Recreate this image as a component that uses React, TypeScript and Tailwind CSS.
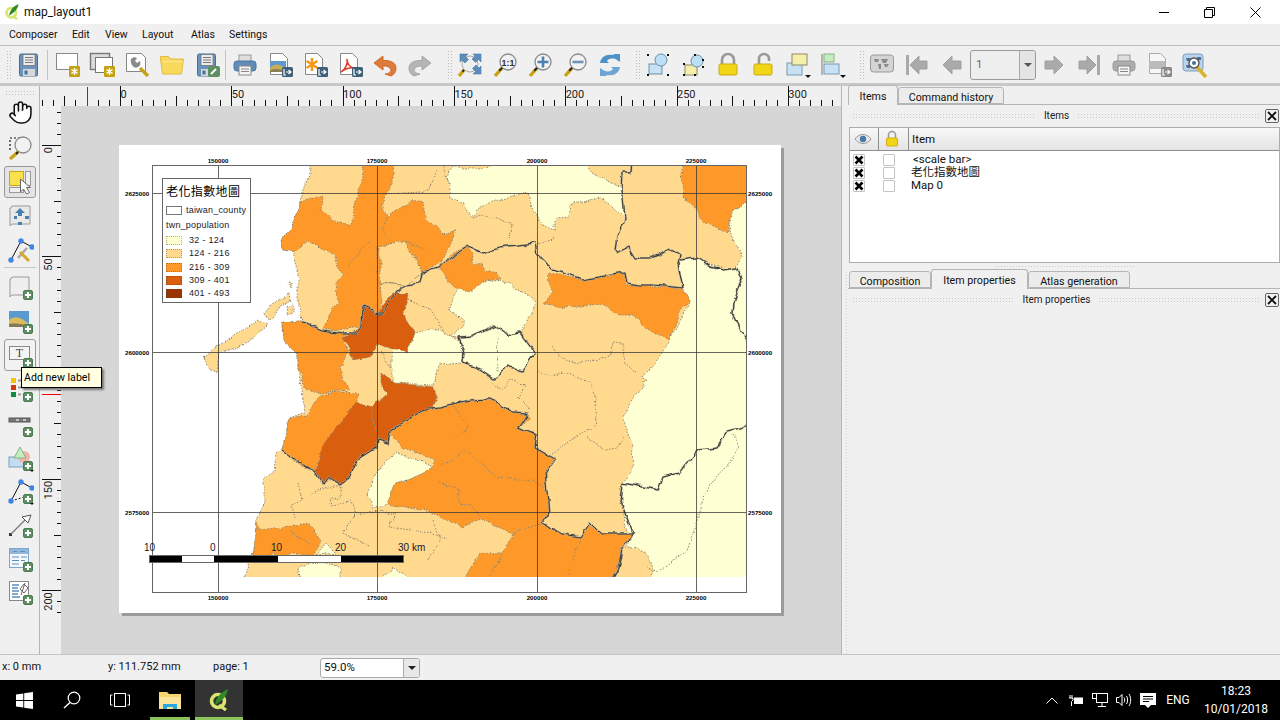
import React from "react";
import { Hand } from "lucide-react";

const I = ({ children, s = 28 }: { children: React.ReactNode; s?: number }) => (
  <svg width={s} height={s} viewBox="0 0 28 28" className="block shrink-0">{children}</svg>
);

const Gear = () => (
  <g>
    <rect x="16" y="15" width="11" height="11" rx="1" fill="#c6a212" />
    <path d="M21.5 17v7M18.5 18.7l6 3.6M24.5 18.7l-6 3.6" stroke="#fff" strokeWidth="1.4" />
  </g>
);
const Plus = () => (
  <g>
    <rect x="17.5" y="17.5" width="9" height="9" rx="1.5" fill="#5d8f62" stroke="#4c7a52" />
    <rect x="21" y="19" width="2" height="6" fill="#fff" />
    <rect x="19" y="21" width="6" height="2" fill="#fff" />
  </g>
);
const Exp = ({ c = "#3f6079" }: { c?: string }) => (
  <g>
    <rect x="16" y="16" width="11" height="10" rx="1.5" fill={c} />
    <path d="M18 18v6h2M20 21h4M22.5 19l2.5 2-2.5 2" stroke="#fff" strokeWidth="1.2" fill="none" />
  </g>
);
const PageF = ({ c = "#888" }: { c?: string }) => (
  <path d="M4.5 2.5h12l5 5v16h-17z" fill="#fff" stroke={c} />
);
const Mag = ({ cx = 17, cy = 11, r = 8 }: { cx?: number; cy?: number; r?: number }) => (
  <g>
    <path d={`M${cx - r * 0.7} ${cy + r * 0.7}L4 25`} stroke="#c9a21a" strokeWidth="3.4" />
    <path d={`M${cx - r * 0.7} ${cy + r * 0.7}L${cx - r * 1.1} ${cy + r * 1.1}`} stroke="#222" strokeWidth="2" />
    <circle cx={cx} cy={cy} r={r} fill="#f2f2f2" stroke="#8a8a8a" strokeWidth="1.3" />
  </g>
);
const Disk = () => (
  <g>
    <path d="M5 4.5a1.5 1.5 0 0 1 1.5-1.5h15a1.5 1.5 0 0 1 1.5 1.5v19a1.5 1.5 0 0 1-1.5 1.5h-15a1.5 1.5 0 0 1-1.5-1.5z" transform="translate(-.5 0)" fill="#6c93bd" stroke="#41709f" />
    <rect x="8" y="3.5" width="12" height="11" fill="#ececec" stroke="#6a6a6a" strokeWidth=".7" />
    <path d="M10 6.5h8M10 9h8M10 11.5h8" stroke="#777" />
    <rect x="8" y="18" width="12" height="7" fill="#d8d8d8" />
    <rect x="9.5" y="19.5" width="3" height="4" fill="#44709c" />
  </g>
);
const Printer = ({ m = "#5f8cb8", d = "#4a779f" }: { m?: string; d?: string }) => (
  <g>
    <rect x="8" y="4" width="12" height="8" fill="#dedede" stroke="#999" />
    <rect x="3" y="10" width="22" height="10" rx="3" fill={m} stroke={d} />
    <rect x="8" y="15" width="12" height="9" fill="#f4f4f4" stroke="#888" />
    <path d="M10 18h8M10 20.5h8" stroke="#888" />
  </g>
);
const Land = () => (
  <g>
    <rect x="4" y="10" width="16" height="11" fill="#5b9ad0" />
    <path d="M4 21v-4c5-5 9-4 16 0v4z" fill="#c6ad5a" />
    <path d="M4 21v-2c6-2 10-1 16 1v1z" fill="#8d8052" />
  </g>
);
const Ic: Record<string, React.ReactNode> = {
  save: <I><Disk /></I>,
  new: <I><rect x="3.5" y="2.5" width="21" height="16" fill="#fff" stroke="#888" /><Gear /></I>,
  dup: <I><rect x="2.5" y="2.5" width="19" height="16" fill="#dcdcdc" stroke="#777" strokeWidth="1.4" /><rect x="7.5" y="6.5" width="17" height="15" fill="#fff" stroke="#777" /><Gear /></I>,
  man: <I><path d="M3.5 2.5h15l4 4v14h-19z" fill="#fff" stroke="#888" /><path d="M17 17l8 8" stroke="#c9a21a" strokeWidth="3.4" /><path d="M8 8c2-2 4-2 6-1l-2 3 2 2 3-2c1 3 0 5-2 6s-3 1-4 0c-2-1-4-5-3-8z" fill="#8a8a8a" /></I>,
  folder: <I><path d="M2.5 8V5.5h8l2 2.5h13l-2 15h-19z" fill="#f8d95c" stroke="#e0bb45" /><path d="M5 10.5h20" stroke="#fbe89a" /></I>,
  saveas: <I><Disk /><rect x="15" y="15" width="12" height="11" rx="2" fill="#5d8f62" /><path d="M18 23l5-5" stroke="#fff" strokeWidth="2" /></I>,
  print: <I><Printer /></I>,
  img: <I><PageF /><Land /><Exp /></I>,
  svg: <I><PageF /><path d="M11 7v13M5.5 10l11 7M16.5 10l-11 7" stroke="#f59a1b" strokeWidth="2.6" /><Exp /></I>,
  pdf: <I><PageF /><path d="M5 21c4-2 7-8 6-13 0 5 3 9 8 9-5-1-10 1-14 4z" fill="none" stroke="#e0392c" strokeWidth="1.5" /><Exp /></I>,
  undo: <I><path d="M12 5L3 12l9 7v-4c4-.5 7 1 8 4 0 1-2 4-6 4l6 2c4-2 5-5 5-8 0-5-5-8-13-7.5z" fill="#df7b3a" stroke="#cf6b2a" /></I>,
  redo: <I><path d="M16 5l9 7-9 7v-4c-4-.5-7 1-8 4 0 1 2 4 6 4l-6 2c-4-2-5-5-5-8 0-5 5-8 13-7.5z" fill="#b5b5b5" stroke="#a5a5a5" /></I>,
  full: <I><circle cx="14" cy="13" r="8" fill="#efefef" stroke="#aaa" /><path d="M4 3h8L9.5 5.5l3 3-3.5 3.5-3-3L4 11zM25 3v8l-2.5-2.5-3 3L16 8l3-3L17 3zM25 23h-8l2.5-2.5-3-3 3.5-3.5 3 3 2-2z" fill="#5b8cba" stroke="#4a7aa8" strokeWidth=".6" /><path d="M8 19L3 25" stroke="#c9a21a" strokeWidth="3.4" /><path d="M8 19l-1.5 1.5" stroke="#222" strokeWidth="2" /></I>,
  z11: <I><Mag /><text x="17" y="14.5" textAnchor="middle" fontSize="9" fontWeight="700" fill="#333" fontFamily="Liberation Sans, sans-serif">1:1</text></I>,
  zin: <I><Mag /><path d="M17 5.5v11M11.5 11h11" stroke="#4f81b0" strokeWidth="2.6" /></I>,
  zout: <I><Mag /><path d="M11.5 11h11" stroke="#6f93b5" strokeWidth="2.6" /></I>,
  ref: <I><path d="M4 12c1-6 6-9 12-8l3-1 5 0v8l-3-2c-3-2-8-2-10 1l2 2z" fill="#4d93c9" /><path d="M24 16c-1 6-6 9-12 8l-3 1-5 0v-8l3 2c3 2 8 2 10-1l-2-2z" fill="#6ca5d3" /></I>,
  group: <I><rect x="5" y="13" width="13" height="10" fill="#c7e2f5" stroke="#6a8fa8" /><circle cx="17" cy="9" r="6" fill="#bcdff5" stroke="#6a8fa8" /><path d="M3 3h2v2H3zM23 3h2v2h-2zM3 23h2v2H3zM23 23h2v2h-2z" fill="#111" /></I>,
  ungroup: <I><rect x="6" y="14" width="12" height="10" fill="#f4efaa" stroke="#8a8a6a" /><circle cx="18" cy="10" r="6" fill="#bcdff5" stroke="#6a8fa8" /><path d="M4 12h2v2H4zM15 3h2v2h-2zM23 8h2v2h-2zM23 15h2v2h-2zM4 23h2v2H4zM15 23h2v2h-2z" fill="#111" /></I>,
  lock: <I><path d="M8 14V9a6 6 0 0 1 12 0v5" fill="none" stroke="#999" strokeWidth="2.6" /><rect x="5" y="13" width="18" height="11" rx="1.5" fill="#f2d516" stroke="#c9a914" /></I>,
  unlock: <I><path d="M11 14V8a5 5 0 0 1 10 0v2" fill="none" stroke="#999" strokeWidth="2.6" transform="translate(-1 0)" /><rect x="5" y="13" width="18" height="11" rx="1.5" fill="#f2d516" stroke="#c9a914" /></I>,
  raise: <I><rect x="3" y="12" width="15" height="12" fill="#c7e2f5" stroke="#7a9ab0" /><rect x="8" y="3" width="15" height="11" fill="#f4efaa" stroke="#8a8a6a" /><path d="M21 24h6l-3 3z" fill="#111" /></I>,
  align: <I><path d="M3 3v21" stroke="#777" /><rect x="5" y="3" width="10" height="8" fill="#c4eec0" stroke="#8ab088" /><rect x="5" y="13" width="15" height="10" fill="#c7e2f5" stroke="#7a9ab0" /><path d="M21 24h6l-3 3z" fill="#111" /></I>,
  atlas: <I><rect x="2.5" y="4" width="23" height="17" rx="3" fill="#d4d4d4" stroke="#999" /><path d="M6 8h5l-1 3H7zM13 8h7l-2 4h-3zM10 13h3v5h-2zM16 13h5l-2 3h-2z" fill="#8a8a8a" /></I>,
  first: <I><path d="M3 4h3v20H3z" fill="#aaa" /><path d="M7 14l9-9v5h8v8h-8v5z" fill="#aaa" stroke="#a0a0a0" /></I>,
  prev: <I><path d="M5 14l9-9v5h9v8h-9v5z" fill="#aaa" stroke="#a0a0a0" /></I>,
  next: <I><path d="M23 14l-9-9v5H5v8h9v5z" fill="#aaa" stroke="#a0a0a0" /></I>,
  last: <I><path d="M25 4h-3v20h3z" fill="#aaa" /><path d="M21 14l-9-9v5H4v8h8v5z" fill="#aaa" stroke="#a0a0a0" /></I>,
  gprint: <I><Printer m="#adadad" d="#999" /></I>,
  gexp: <I><path d="M4.5 2.5h11l5 5v15h-16z" fill="#f6f6f6" stroke="#aaa" /><rect x="4" y="10" width="16" height="8" fill="#bbb" /><Exp c="#8a8a8a" /></I>,
  aset: <I><rect x="3" y="3" width="20" height="17" rx="3" fill="#b9d3ec" stroke="#7c9dbd" /><path d="M6 7h5l-1 3H7zM6 14h4v3H7zM17 6h4v3h-4z" fill="#4b6f92" /><path d="M16 15l10 11" stroke="#d7b32a" strokeWidth="3.4" /><circle cx="14" cy="12" r="5" fill="#fff" stroke="#555" strokeWidth="1.4" /><circle cx="14" cy="12" r="2" fill="#4b6f92" /></I>,

  zarea: <I><path d="M4 18V6h12" fill="none" stroke="#111" strokeWidth="1.2" strokeDasharray="2 2" /><path d="M12 20l-8 7" stroke="#c9a21a" strokeWidth="3.4" /><path d="M12 20l-2 2" stroke="#222" strokeWidth="2" /><circle cx="17" cy="13" r="8" fill="#f2f2f2" stroke="#8a8a8a" strokeWidth="1.3" /></I>,
  sel: <I><rect x="3.5" y="3.5" width="14" height="14" fill="#fbe04e" stroke="#c9a914" /><rect x="19.5" y="3.5" width="5" height="14" fill="#eee" stroke="#999" /><rect x="3.5" y="19.5" width="14" height="5" fill="#eee" stroke="#999" /><path d="M13 12l0 13 3-3 3 5 3-1.5-3-5 4 0z" transform="translate(1.5 -1)" fill="#fff" stroke="#666" /></I>,
  move: <I><path d="M5 6a2 2 0 0 1 2-2h17v18H7a3 3 0 0 0-3 2V6z" fill="#e9e9e9" stroke="#999" /><path d="M14 6l5 5h-3v3h-4v-3H9z" fill="#4a7eaf" /><path d="M8 14h3v3H8zM19 14h4v3h-4zM12 20h4v3h-4z" fill="#4a7eaf" /></I>,
  edit: <I><path d="M15 5l11 6M5 24l10-19" stroke="#111" fill="none" /><path d="M21 12l-9 10" stroke="#aaa" strokeWidth="2.5" /><path d="M14 16l9 9" stroke="#d8a928" strokeWidth="3" /><circle cx="15" cy="5" r="2.7" fill="#3f85e6" /><circle cx="26" cy="11" r="2.7" fill="#3f85e6" /><circle cx="5" cy="24" r="2.7" fill="#3f85e6" /></I>,
  amap: <I><path d="M5 6a2 2 0 0 1 2-2h16v18H7a3 3 0 0 0-3 2V6z" fill="#eee" stroke="#999" /><Plus /></I>,
  aimg: <I><rect x="3" y="4" width="20" height="16" fill="#5b9ad0" /><path d="M3 20v-7c6-5 12-3 20 4v3z" fill="#d8bc5e" /><path d="M3 20v-3c8-1 13 0 20 2v1z" fill="#857a55" /><Plus /></I>,
  alab: <I><rect x="3.5" y="5.5" width="20" height="13" fill="#f5f5f5" stroke="#888" /><text x="13.5" y="16" textAnchor="middle" fontSize="12" fill="#444" fontFamily="Liberation Serif, serif">T</text><Plus /></I>,
  aleg: <I><rect x="5" y="3" width="5" height="5" fill="#f5c400" /><rect x="5" y="10" width="5" height="5" fill="#d43a10" /><rect x="5" y="17" width="5" height="5" fill="#0d8f3f" /><path d="M12 5.5h9M12 12.5h9M12 19.5h3" stroke="#999" strokeWidth="2" /><Plus /></I>,
  ascale: <I><rect x="3" y="8" width="21" height="4" fill="#777" stroke="#555" /><path d="M10 10h3M17 10h3" stroke="#ddd" strokeWidth="1.5" /><Plus /></I>,
  ashape: <I><rect x="3" y="13" width="16" height="10" fill="#c2ddf2" stroke="#7aa0c2" /><circle cx="18" cy="13" r="6" fill="#f2b3ab" /><path d="M8 14l6-11 6 11z" fill="#c4eec0" stroke="#8ab088" /><Plus /><path d="M24 26h4l-2 2z" fill="#111" /></I>,
  anode: <I><path d="M15 5l11 6M5 24l10-19" stroke="#111" /><path d="M5 24l17-5" stroke="#111" strokeDasharray="2 2" /><circle cx="15" cy="5" r="2.7" fill="#3f85e6" /><circle cx="26" cy="11" r="2.7" fill="#3f85e6" /><circle cx="5" cy="24" r="2.7" fill="#3f85e6" /><Plus /><path d="M24 26h4l-2 2z" fill="#111" /></I>,
  aarrow: <I><rect x="3" y="22" width="3" height="3" fill="#333" /><path d="M5 23L20 8" stroke="#777" strokeWidth="1.2" /><path d="M25 4l-9 2 6 6z" fill="#fff" stroke="#555" /><Plus /></I>,
  atable: <I><rect x="3.5" y="3.5" width="19" height="19" fill="#f4f8fc" stroke="#7ea5cc" /><rect x="4" y="4" width="18" height="5" fill="#92b7da" /><path d="M7 6.5h4M14 6.5h5M6 12h7M15 12h6M6 15.5h7M15 15.5h4M6 19h7" stroke="#5c8fc0" strokeWidth="1.2" /><Plus /></I>,
  ahtml: <I><rect x="3.5" y="3.5" width="19" height="19" fill="#fff" stroke="#888" /><path d="M6 7h7M6 10h6M6 13h7M6 16h6M6 19h8" stroke="#5c8fc0" strokeWidth="1.6" /><path d="M18 6l-4 5 4 4 4-5zM19 5l-4 12" fill="none" stroke="#666" /><Plus /></I>,
};

const TB = ({ n }: { n: string }) => (
  <div className="w-[35px] h-[35px] flex items-center justify-center shrink-0">{Ic[n]}</div>
);
const Grip = ({ c = "" }: { c?: string }) => (
  <div className={`w-[5px] h-[30px] shrink-0 bg-[radial-gradient(circle,#bdbdbd_1px,transparent_1px)] bg-[length:3px_3px] ${c}`} />
);
const Sep = () => <div className="w-px h-[30px] bg-[#c4c4c4] shrink-0" />;

const Toolbar = () => (
  <div className="h-[41px] shrink-0 flex items-center pl-[6px] pt-px border-t border-[#bdbdbd] border-b-[3px] border-b-[#c8c8c8]">
    <Grip /><TB n="save" /><div className="ml-px mr-[1px]"><Sep /></div>
    <TB n="new" /><TB n="dup" /><TB n="man" /><TB n="folder" /><TB n="saveas" />
    <div className="mx-px"><Sep /></div>
    <TB n="print" /><TB n="img" /><TB n="svg" /><TB n="pdf" /><TB n="undo" /><TB n="redo" />
    <Grip c="ml-[10px]" />
    <TB n="full" /><TB n="z11" /><TB n="zin" /><TB n="zout" /><TB n="ref" />
    <Grip c="ml-[8px]" />
    <TB n="group" /><TB n="ungroup" /><TB n="lock" /><TB n="unlock" /><TB n="raise" /><TB n="align" />
    <Grip c="ml-[9px]" />
    <TB n="atlas" /><TB n="first" /><TB n="prev" />
    <div className="ml-px w-[66px] h-[30px] shrink-0 flex border border-[#9a9a9a] rounded-[3px] bg-[#eeeeee]">
      <div className="flex-1 pl-[5px] flex items-center text-[11.5px] text-[#66667a]">1</div>
      <div className="w-[16px] border-l border-[#aaa] flex items-center justify-center bg-[#e4e4e4] rounded-r-[3px]">
        <div className="w-0 h-0 border-x-[4px] border-x-transparent border-t-[4px] border-t-[#555]" />
      </div>
    </div>
    <TB n="next" /><TB n="last" /><TB n="gprint" /><TB n="gexp" /><TB n="aset" />
  </div>
);

const LeftTool = ({ n, c }: { n: string; c?: string }) => (
  <div className={`w-[32px] h-[34px] ml-[4px] flex items-center justify-center shrink-0 ${c ?? ""}`}>{Ic[n]}</div>
);
const boxed = "!h-[32px] border border-[#999] rounded-[3px]";

const LeftBar = () => (
  <div className="w-[39px] shrink-0 flex flex-col pt-[4px]">
    <div className="h-[5px] w-[30px] ml-[5px] bg-[radial-gradient(circle,#c4c4c4_1px,transparent_1px)] bg-[length:3px_3px]" />
    <div className="w-[32px] h-[34px] ml-[4px] flex items-center justify-center">
      <Hand size={25} fill="#fff" stroke="#111" strokeWidth={1.5} />
    </div>
    <LeftTool n="zarea" />
    <LeftTool n="sel" c={`${boxed} bg-[#e4e4e4] mt-[3px]`} />
    <LeftTool n="move" c="mt-px" />
    <LeftTool n="edit" />
    <div className="h-px w-[32px] ml-[4px] shrink-0 bg-[#c8c8c8]" />
    <LeftTool n="amap" c="mt-[2px]" />
    <LeftTool n="aimg" />
    <LeftTool n="alab" c={`${boxed} bg-[#f2f2f2] mt-px`} />
    <LeftTool n="aleg" c="mt-px" />
    <LeftTool n="ascale" c="mt-px" />
    <LeftTool n="ashape" />
    <LeftTool n="anode" c="-mt-px" />
    <LeftTool n="aarrow" />
    <LeftTool n="atable" />
    <LeftTool n="ahtml" c="-mt-px" />
  </div>
);

const RULE_X = 120;
const RULE_Y = 145;
const step = 11.13;
const topTicks = Array.from({ length: 72 }, (_, i) => i - 7);
const TopRuler = () => (
  <svg width="800" height="20" viewBox="41 86 800 20" className="block shrink-0 bg-[#f0f0f0]">
    {topTicks.map((k) => {
      const x = Math.round(RULE_X + k * step) + 0.5;
      const big = k % 10 === 0;
      const mid = k % 5 === 0;
      return <line key={k} x1={x} x2={x} y1={big ? 86 : mid ? 96 : 100} y2={106} stroke="#111" />;
    })}
    {[0, 50, 100, 150, 200, 250, 300].map((v) => (
      <text key={v} x={RULE_X + (v / 5) * step + 0.5} y={98} fontSize="11" fill="#222" fontFamily="Roboto, sans-serif">{v}</text>
    ))}
    <line x1="87.5" x2="87.5" y1="87" y2="106" stroke="#e00" />
  </svg>
);
const leftTicks = Array.from({ length: 46 }, (_, i) => i - 3);
const LeftRuler = () => (
  <svg width="20" height="548" viewBox="41 106 20 548" className="block shrink-0 bg-[#f0f0f0]">
    {leftTicks.map((k) => {
      const y = Math.round(RULE_Y + k * step) + 0.5;
      const big = k % 10 === 0;
      const mid = k % 5 === 0;
      return <line key={k} y1={y} y2={y} x1={big ? 42 : mid ? 54 : 57} x2={61} stroke="#111" />;
    })}
    {[0, 50, 100, 150, 200].map((v) => {
      const y = RULE_Y + (v / 5) * step + 2;
      return (
        <text key={v} x={0} y={0} transform={`translate(52 ${y}) rotate(-90)`} textAnchor="end" fontSize="11" fill="#222" fontFamily="Roboto, sans-serif">{v}</text>
      );
    })}
    <line x1="42" x2="61" y1="394.5" y2="394.5" stroke="#e00" />
  </svg>
);

const ext = (s: string) =>
  s.split(" ").map((p) => {
    let [x, y] = p.split(",").map(Number);
    if (x >= 745) x = 756;
    if (y <= 165) y = 155;
    if (y >= 577) y = 587;
    return `${x},${y}`;
  }).join(" ");

const CREAM = "#ffffd4", LIGHT = "#fed98e", OR = "#fe9929", DK = "#d95f0e";
const land = "313,165 310,173 302,192 300,202 295,213 292,228 280,242 283,248 293,250 293,257 298,273 298,307 303,322 282,323 283,340 298,353 298,370 300,380 302,400 305,412 290,418 282,450 277,453 275,472 265,478 265,503 257,520 253,547 242,577 746,577 746,165";
const polys: [string, string][] = [
  [CREAM, "680,260 697,258 710,265 725,269 737,268 742,257 737,245 730,233 732,212 746,195 746,577 650,577 653,570 647,553 627,547 632,533 627,533 622,503 623,483 632,473 633,443 623,420 630,403 647,380 643,377 663,353 670,340 690,300 683,288 678,263"],
  [CREAM, "447,177 453,168 483,168 523,165 580,165 593,173 622,188 625,218 610,203 600,198 582,202 570,205 568,217 555,218 555,230 543,225 532,208 528,193 510,197 480,207 472,217 463,203 450,197"],
  [CREAM, "450,310 457,290 483,282 503,280 530,297 537,303 520,337 507,333 493,325 472,337 458,338 450,337 463,327 463,320"],
  [CREAM, "458,338 472,337 495,325 507,335 520,333 535,353 523,370 510,367 493,378 477,367 462,363 463,353"],
  [CREAM, "393,352 412,335 438,328 450,337 458,340 463,353 462,363 440,365 435,385 393,383 393,370"],
  [CREAM, "368,492 382,465 397,453 420,462 432,467 415,477 395,483 387,505 373,510"],
  [CREAM, "298,567 310,563 340,565 342,577 302,577"],
  [CREAM, "317,555 327,543 337,553"],
  [CREAM, "377,577 393,567 417,577"],
  [CREAM, "367,165 377,172 390,165"],
  [OR, "680,165 683,197 707,223 728,233 732,212 746,195 746,165"],
  [OR, "550,273 580,280 607,277 625,273 625,285 640,285 653,287 683,288 690,300 680,310 670,340 650,332 632,315 618,315 603,303 577,308 542,305 552,293 547,280"],
  [OR, "440,267 457,252 467,247 473,255 472,265 483,263 485,272 495,272 502,278 483,282 470,293 453,287 443,273"],
  [OR, "280,242 292,228 295,213 300,202 323,195 322,210 333,220 350,227 358,192 363,180 362,165 393,165 392,183 382,203 387,217 412,200 423,203 425,217 442,233 456,230 450,243 442,263 422,272 405,285 380,283 382,303 377,313 363,307 362,327 337,330 323,328 328,317 337,303 335,283 343,273 337,270 335,255 310,242 293,250 283,248"],
  [LIGHT, "380,247 405,240 422,272 405,285 380,283"],
  [OR, "282,323 298,322 323,330 347,333 343,340 350,353 340,367 348,390 320,393 303,388 302,375 298,370 298,353 283,340"],
  [OR, "290,418 307,415 320,395 337,392 358,393 357,403 340,422 327,437 320,457 313,470 302,467 282,450"],
  [DK, "343,337 363,327 363,308 377,313 393,293 407,293 405,313 415,333 407,353 377,345 370,357 353,360 350,348"],
  [DK, "380,373 393,383 435,387 437,397 427,410 407,420 393,428 388,443 378,440 372,413 373,407 388,393 380,385"],
  [DK, "357,403 373,407 372,413 378,440 377,448 358,460 350,478 340,485 328,478 323,485 314,471 320,457 327,437 340,422"],
  [OR, "390,433 407,420 427,408 440,407 470,400 490,399 513,412 527,413 528,418 518,427 537,435 535,447 555,458 547,470 545,487 549,512 542,523 513,533 480,520 463,527 450,523 432,513 387,505 395,483 415,477 432,467 435,460 402,447"],
  [OR, "542,523 560,533 580,538 590,523 600,533 632,533 622,550 617,570 607,577 460,577 480,552 503,553 513,533"],
  [OR, "257,523 260,530 310,523 320,540 315,555 252,555"],
];
const dots = [
  "733,435 740,448 710,485 697,520 687,550 658,572 645,566",
  "490,380 502,390 510,380 525,385 517,397 530,410",
  "537,373 573,375 590,383 597,400 593,427 580,435 553,453",
  "587,437 607,450 617,448 625,437",
  "553,345 560,357 580,363 610,357 613,342 622,343 625,363 637,373",
  "497,337 498,373",
  "472,217 480,215 512,223 510,240",
  "555,237 537,245",
  "440,467 467,450 497,478 533,480 543,487",
  "455,437 468,427 455,407",
  "440,483 460,490 458,503 472,505 480,517",
  "580,538 567,577",
  "503,553 490,577",
  "298,483 302,500 292,507 295,520",
  "310,493 327,487 342,487 340,497 330,498 332,505 350,502 355,513 343,533 370,547",
  "355,513 397,512 390,527 410,530 430,533 447,540",
  "435,170 432,185 422,193 383,195",
  "443,167 450,187",
  "387,217 382,230 387,240",
  "378,247 377,283",
  "368,243 347,267",
  "380,283 403,285",
  "405,240 425,250",
  "407,300 430,310 445,333",
  "380,352 395,370",
  "312,545 290,530",
  "432,520 440,540 428,560",
];
const counties = [
  "632,165 631,173 623,173 622,190 625,218 617,237 615,250 617,253 628,247 635,258 650,258 660,255 670,248 680,255 678,263 683,288 653,285 640,285 627,283 625,273 610,275 583,280 553,270 537,253 535,243 500,247 482,253 468,247 463,250 440,268 422,272 420,283 405,285 397,292 383,313 377,313 363,307 362,327 358,333 343,333 323,330 303,323",
  "680,260 697,258 710,267 723,270 737,268 742,277 733,303 732,313 740,330 745,353",
  "458,338 472,337 495,325 507,335 520,333 535,353 523,370 510,367 493,378 477,367 462,363 463,353 458,338",
  "282,450 300,463 315,472 323,485 328,478 340,485 350,478 358,460 377,448 378,440 388,443 390,432 407,420 427,408 440,407 470,400 490,399 513,412 527,413 518,427 537,435 535,447 555,458 545,473 549,512 542,523 563,535 580,538 590,523 600,533 632,533 622,550 617,570 607,577",
  "632,533 625,513 621,502 623,483 658,490 663,477 680,473 697,450 717,448 727,432 743,428 746,418",
];
const islands = [
  "203,357 213,348 233,337 257,320 267,325 247,343 220,353 218,373 207,367",
  "265,313 273,303 283,300 290,293 291,299 277,310 272,320 267,319",
  "287,307 293,303 293,313 288,315",
  "288,283 291,284 290,288",
];
const vGrid = [218, 377, 537, 696];
const hGrid = [193, 352, 512];
const gridLabelV = ["150000", "175000", "200000", "225000"];
const gridLabelH = ["2625000", "2600000", "2575000"];
const gridFont = { fontFamily: "Liberation Sans, sans-serif", fontSize: 6.2, fontWeight: 700, fill: "#000" } as const;

const MapSvg = () => (
  <svg width="662" height="468" viewBox="119 145 662 468" className="block">
    <defs>
      <clipPath id="mapclip"><rect x="153" y="165" width="593" height="412" /></clipPath>
      <filter id="rough" x="140" y="150" width="630" height="445" filterUnits="userSpaceOnUse" colorInterpolationFilters="sRGB">
        <feTurbulence type="fractalNoise" baseFrequency="0.07" numOctaves="3" seed="4" />
        <feDisplacementMap in="SourceGraphic" scale="7" xChannelSelector="R" yChannelSelector="G" />
      </filter>
    </defs>
    <g clipPath="url(#mapclip)">
      <g filter="url(#rough)">
        <polygon points={ext(land)} fill={LIGHT} stroke="#8f8672" strokeDasharray="1.5 1.5" />
        {islands.map((p) => <polygon key={p} points={p} fill={LIGHT} stroke="#8f8672" strokeDasharray="1.5 1.5" />)}
        {polys.map(([c, p]) => <polygon key={p} points={ext(p)} fill={c} stroke="#8f8672" strokeDasharray="1.5 1.5" />)}
        {dots.map((p) => <polyline key={p} points={p} fill="none" stroke="#8f8672" strokeDasharray="1.5 1.5" />)}
        {counties.map((p) => (
          <g key={p}>
            <polyline points={ext(p)} fill="none" stroke="#aaa69a" strokeWidth="2" />
            <polyline points={ext(p)} fill="none" stroke="#3a372f" strokeWidth="1" />
          </g>
        ))}
      </g>
    </g>
    {vGrid.map((x, i) => (
      <g key={x}>
        <line x1={x + 0.5} x2={x + 0.5} y1="165" y2="592" stroke="#333" strokeOpacity=".75" />
        <text x={x} y="163" textAnchor="middle" {...gridFont}>{gridLabelV[i]}</text>
        <text x={x} y="600" textAnchor="middle" {...gridFont}>{gridLabelV[i]}</text>
      </g>
    ))}
    {hGrid.map((y, i) => (
      <g key={y}>
        <line x1="152" x2="746" y1={y + 0.5} y2={y + 0.5} stroke="#333" strokeOpacity=".75" />
        <text x="125" y={y + 2.5} {...gridFont}>{gridLabelH[i]}</text>
        <text x="748" y={y + 2.5} {...gridFont}>{gridLabelH[i]}</text>
      </g>
    ))}
    <rect x="152.5" y="165.5" width="594" height="427" fill="none" stroke="#666" />
  </svg>
);

const swatches: [string, string, string][] = [
  ["#ffffd4", "32 - 124", "#b5ad80"],
  ["#fed98e", "124 - 216", "#b09a6a"],
  ["#fe9929", "216 - 309", "#a87a3a"],
  ["#d95f0e", "309 - 401", "#8a5020"],
  ["#993404", "401 - 493", "#604030"],
];
const Legend = () => (
  <div className="absolute left-[43px] top-[33px] w-[89px] h-[125px] bg-white border border-[#666] text-[9px] text-[#1a1a2a] font-['Liberation_Sans',sans-serif] pt-[3px] pl-[3px]">
    <div className="h-[18px] text-[12px] leading-[18px] tracking-[0.4px] text-black font-['Noto_Sans_CJK_TC','Noto_Sans_CJK_SC',sans-serif]">老化指數地圖</div>
    <div className="flex items-center h-[13px] mt-[4px]">
      <div className="w-[16px] h-[9px] border border-[#777] bg-white" />
      <span className="ml-[4px] tracking-[0.2px]">taiwan_county</span>
    </div>
    <div className="h-[13px] mt-[2px] leading-[13px] tracking-[0.2px]">twn_population</div>
    <div className="flex flex-col mt-[2px]">
      {swatches.map(([c, t, b]) => (
        <div key={t} className="flex items-center h-[13.3px]">
          <div className="w-[16px] h-[9px] border border-dotted" style={{ background: c, borderColor: b }} />
          <span className="ml-[7px] tracking-[0.3px]">{t}</span>
        </div>
      ))}
    </div>
  </div>
);
const ScaleBar = () => (
  <div className="absolute left-[30px] top-[395px] w-[255px] font-['Liberation_Sans',sans-serif] text-[10px] text-[#1a1a2a]">
    <div className="relative h-[15px]">
      <span className="absolute left-[-5px] top-0">10</span>
      <span className="absolute left-[61px] top-0">0</span>
      <span className="absolute left-[122px] top-0">10</span>
      <span className="absolute left-[186px] top-0">20</span>
      <span className="absolute left-[249px] top-0 whitespace-nowrap">30 km</span>
    </div>
    <div className="flex h-[8px] border border-[#666]">
      <div className="w-[32px] bg-black" />
      <div className="w-[32px] bg-white" />
      <div className="w-[64px] bg-black" />
      <div className="w-[63px] bg-white" />
      <div className="flex-1 bg-black" />
    </div>
  </div>
);

const Canvas = () => (
  <div className="flex-1 flex flex-col min-w-0 border-l border-[#b5b5b5] pl-px">
    <TopRuler />
    <div className="flex h-[548px]">
      <LeftRuler />
      <div className="w-[780px] h-[548px] bg-[#d6d6d6] pl-[58px] pt-[39px] overflow-hidden">
        <div className="relative w-[662px] h-[468px] bg-white shadow-[3px_3px_0_#9a9a9a]">
          <MapSvg />
          <Legend />
          <ScaleBar />
        </div>
      </div>
    </div>
  </div>
);

const GripBar = () => (
  <div className="h-[6px] flex-1 bg-[radial-gradient(circle,#c8c8c8_1px,transparent_1px)] bg-[length:3px_3px]" />
);
const DockTitle = ({ t }: { t: string }) => (
  <div className="h-[17px] flex items-center pl-[4px] text-[10px] text-[#222]">
    <GripBar />
    <span className="px-[8px]">{t}</span>
    <GripBar />
    <div className="w-[14px] h-[14px] ml-[4px] mr-px border border-[#666] rounded-[2px] flex items-center justify-center">
      <svg width="10" height="10" viewBox="0 0 10 10"><path d="M1 1l8 8M9 1l-8 8" stroke="#111" strokeWidth="1.8" /></svg>
    </div>
  </div>
);
const Tab = ({ t, active, w }: { t: string; active?: boolean; w: string }) => (
  <div className={`${w} flex items-center justify-center leading-none border border-[#b5b5b5] rounded-t-[3px] ${active ? "h-[20px] pt-[4px] bg-[#f0f0f0] border-b-0 -mb-px z-10" : "h-[17px] pt-[5px] bg-[#ececec]"}`}>{t}</div>
);
const Chk = ({ x }: { x?: boolean }) => (
  <div className="w-[12px] h-[12px] border border-[#c4c4c4] rounded-[1px] bg-white flex items-center justify-center">
    {x && <svg width="10" height="10" viewBox="0 0 10 10"><path d="M1.5 1.5l7 7M8.5 1.5l-7 7" stroke="#000" strokeWidth="2.6" /></svg>}
  </div>
);
const items: [string, string][] = [
  ["<scale bar>", "pl-[4px]"],
  ["老化指數地圖", "pl-[2px]"],
  ["Map 0", "pl-[2px]"],
];
const Right = () => (
  <div className="w-[432px] ml-auto shrink-0 flex flex-col text-[10.7px] text-[#111] relative">
    <div className="absolute left-[-3px] top-[185px] bottom-0 w-[3px] bg-[radial-gradient(circle,#cfcfcf_1px,transparent_1px)] bg-[length:3px_3px]" />
    <div className="flex items-end h-[19px] border-b border-[#b5b5b5]">
      <Tab t="Items" active w="w-[50px]" />
      <Tab t="Command history" w="w-[106px]" />
    </div>
    <div className="pt-[2px]"><DockTitle t="Items" /></div>
    <div className="h-[136px] ml-px mt-[3px] border border-[#adadad] bg-white flex flex-col text-[11.5px]">
      <div className="h-[23px] flex border-b border-[#8f8f8f] bg-[linear-gradient(#f8f8f8,#e4e4e4)]">
        <div className="w-[29px] pr-[3px] border-r border-[#8f8f8f] flex items-center justify-center">
          <svg width="18" height="12" viewBox="0 0 18 12"><path d="M1 6c4-6 12-6 16 0-4 6-12 6-16 0z" fill="#e8e8e8" stroke="#999" /><circle cx="9" cy="6" r="3.2" fill="#4a78a8" /></svg>
        </div>
        <div className="w-[30px] pr-[3px] border-r border-[#8f8f8f] flex items-center justify-center">
          <svg width="14" height="18" viewBox="0 0 14 18"><path d="M3.5 8V5a3.5 3.5 0 0 1 7 0v3" fill="none" stroke="#999" strokeWidth="1.5" /><rect x="1.5" y="8" width="11" height="8" rx="1" fill="#f2d516" stroke="#d0b014" /></svg>
        </div>
        <div className="flex-1 pl-[3px] pt-[2px] flex items-center text-[11.5px]">Item</div>
      </div>
      <div className="pt-[2px] font-['Roboto','Noto_Sans_CJK_TC',sans-serif]">
        {items.map(([t, p]) => (
          <div key={t} className="h-[13px] flex items-center leading-none">
            <div className="w-[29px] pl-[3px]"><Chk x /></div>
            <div className="w-[30px] pl-[4px]"><Chk /></div>
            <div className={p}>{t}</div>
          </div>
        ))}
      </div>
    </div>
    <div className="h-[4px] mx-auto mt-[2px] w-[140px] bg-[radial-gradient(circle,#c8c8c8_1px,transparent_1px)] bg-[length:3px_3px]" />
    <div className="flex items-end h-[20px] pl-px border-b border-[#b5b5b5]">
      <Tab t="Composition" w="w-[82px]" />
      <Tab t="Item properties" active w="w-[97px]" />
      <Tab t="Atlas generation" w="w-[102px]" />
    </div>
    <div className="pt-[2px]"><DockTitle t="Item properties" /></div>
  </div>
);

const WinIcon = () => (
  <svg width="17" height="17" viewBox="0 0 17 17"><path d="M0 2.5l7.3-1v6.6H0zM8.2 1.3L17 0v8.1H8.2zM0 9h7.3v6.6l-7.300-1zM8.2 9H17v8l-8.8-1.2z" fill="#fff" /></svg>
);

const Taskbar = () => (
  <div className="h-[40px] shrink-0 bg-black flex text-white text-[12px]">
    <div className="w-[48px] flex items-center justify-center"><WinIcon /></div>
    <div className="w-[48px] flex items-center justify-center">
      <svg width="18" height="18" viewBox="0 0 18 18"><circle cx="11" cy="7" r="5.8" fill="none" stroke="#fff" strokeWidth="1.2" /><path d="M7 11.5L1 17" stroke="#fff" strokeWidth="1.4" /></svg>
    </div>
    <div className="w-[48px] flex items-center justify-center">
      <svg width="20" height="14" viewBox="0 0 20 14"><rect x="4.5" y=".5" width="11" height="13" fill="none" stroke="#fff" /><path d="M2.5 2H.5v10h2M17.5 2h2v10h-2" fill="none" stroke="#fff" /></svg>
    </div>
    <div className="w-[40px] ml-[6px] relative flex items-center justify-center">
      <svg width="22" height="19" viewBox="0 0 22 19"><path d="M0 1h8l2 2h12v15H0z" fill="#f6d570" /><path d="M0 6h22v12H0z" fill="#fbe59c" /><path d="M4 18v-5h14v5h-4v-2H8v2z" fill="#2aa6e0" /></svg>
      <div className="absolute left-0 right-0 bottom-0 h-[3px] bg-[#8cc35a]" />
    </div>
    <div className="w-[48px] ml-[5px] relative flex items-center justify-center bg-[#333]">
      <svg width="20" height="22" viewBox="0 0 20 22"><circle cx="9" cy="12" r="6.5" fill="none" stroke="#d8e56e" strokeWidth="3.6" /><path d="M10 16l7 5" stroke="#d8e56e" strokeWidth="3.2" /><path d="M6 16C7 8 12 3 19 0c-1 7-6 12-13 16z" fill="#2f8a25" /></svg>
      <div className="absolute left-0 right-0 bottom-0 h-[3px] bg-[#8cc35a]" />
    </div>
    <div className="ml-auto flex items-center">
      <div className="w-[24px] flex justify-center"><svg width="12" height="7" viewBox="0 0 12 7"><path d="M.5 6.5L6 1l5.5 5.5" fill="none" stroke="#fff" /></svg></div>
      <div className="w-[24px] flex justify-center"><svg width="16" height="11" viewBox="0 0 16 11"><path d="M2 0v3M4 0v3M1 3h4v2L3.5 6.5V11" stroke="#fff" fill="none" /><rect x="6" y="2.5" width="9" height="6.5" fill="#fff" /></svg></div>
      <div className="w-[24px] flex justify-center"><svg width="16" height="14" viewBox="0 0 16 14"><rect x="4.5" y=".5" width="11" height="9" fill="none" stroke="#fff" /><rect x=".5" y=".5" width="4" height="5" fill="#000" stroke="#fff" /><path d="M10 10v3M6 13.5h8" stroke="#fff" /></svg></div>
      <div className="w-[24px] flex justify-center"><svg width="16" height="14" viewBox="0 0 16 14"><path d="M.5 4.5h2.500l3-3v11l-3-3H.5z" fill="none" stroke="#fff" /><path d="M8 4.5c1 1.500 1 3.500 0 5M10.500 3c1.500 2.500 1.500 5.500 0 8M13 1c2.200 3.500 2.200 8.500 0 12" fill="none" stroke="#fff" /></svg></div>
      <div className="w-[24px] flex justify-center"><svg width="16" height="15" viewBox="0 0 16 15"><path d="M0 0h16v12h-5l-3 3-3-3H0z" fill="#fff" /><path d="M3 3.5h10M3 6h10M3 8.5h6" stroke="#000" /></svg></div>
      <div className="w-[36px] text-center">ENG</div>
      <div className="w-[80px] mr-[4px] text-center leading-[18px]">
        <div>18:23</div>
        <div>10/01/2018</div>
      </div>
    </div>
  </div>
);

export default function App() {
  return (
    <div className="relative w-[1280px] h-[720px] overflow-hidden flex flex-col bg-[#f0f0f0] text-[12px] text-[#111] font-['Roboto','Noto_Sans_CJK_TC',sans-serif]">
      <div className="h-[24px] shrink-0 bg-white flex items-center">
        <div className="w-[24px] flex justify-center">
          <svg width="16" height="16" viewBox="0 0 20 22"><circle cx="9" cy="12" r="6.5" fill="none" stroke="#d8e56e" strokeWidth="3.6" /><path d="M10 16l7 5" stroke="#d8e56e" strokeWidth="3.2" /><path d="M6 16C7 8 12 3 19 0c-1 7-6 12-13 16z" fill="#2f8a25" /></svg>
        </div>
        <span className="text-[12px]">map_layout1</span>
        <div className="ml-auto flex items-center h-full">
          <div className="w-[46px] flex justify-center mr-[-1px]"><div className="w-[10px] h-px bg-black" /></div>
          <div className="w-[46px] flex justify-center">
            <svg width="11" height="11" viewBox="0 0 11 11"><path d="M.5 2.5h8v8h-8zM2.5 2.5v-2h8v8h-2" fill="none" stroke="#000" /></svg>
          </div>
          <div className="w-[46px] mr-[-2px] flex justify-center">
            <svg width="11" height="11" viewBox="0 0 11 11"><path d="M.5.5l10 10M10.5.5l-10 10" stroke="#000" /></svg>
          </div>
          <div className="w-[4px]" />
        </div>
      </div>
      <div className="h-[21px] shrink-0 flex items-center pl-[9px] text-[10.5px]">
        <div className="w-[63px]">Composer</div>
        <div className="w-[33px]">Edit</div>
        <div className="w-[37px]">View</div>
        <div className="w-[49px]">Layout</div>
        <div className="w-[38px]">Atlas</div>
        <div>Settings</div>
      </div>
      <Toolbar />
      <div className="flex h-[569px] shrink-0 border-b border-[#c4c4c4]">
        <LeftBar />
        <div className="w-[803px] flex flex-col shrink-0 border-r border-[#b5b5b5]">
          <Canvas />
        </div>
        <Right />
      </div>
      <div className="h-[25px] shrink-0 flex items-center text-[11px] pl-[2px]">
        <div className="w-[106px]">x: 0 mm</div>
        <div className="w-[105px]">y: 111.752 mm</div>
        <div className="w-[107px]">page: 1</div>
        <div className="w-[100px] h-[20px] flex border border-[#aaa] rounded-[3px] bg-white">
          <div className="flex-1 pl-[3px] flex items-center text-[11.5px]">59.0%</div>
          <div className="w-[16px] border-l border-[#aaa] bg-[#e8e8e8] flex items-center justify-center rounded-r-[3px]">
            <div className="w-0 h-0 border-x-[4px] border-x-transparent border-t-[4px] border-t-[#222]" />
          </div>
        </div>
      </div>
      <Taskbar />
      <div className="absolute left-[21px] top-[367px] w-[81px] h-[21px] bg-[#ffffe1] border border-black shadow-[2px_2px_2px_#777] flex items-center pl-[2px] text-[10.6px] text-black">Add new label</div>
    </div>
  );
}
